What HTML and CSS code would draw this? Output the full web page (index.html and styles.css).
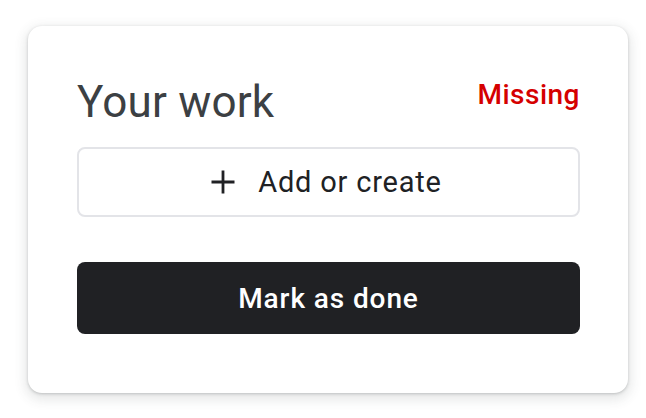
FILE: index.html
```html
<!DOCTYPE html>
<html>
<head>
<meta charset="utf-8">
<link rel="stylesheet" href="styles.css">
</head>
<body>
<div class="card">
  <div class="header">
    <h2 class="title">Your work</h2>
    <span class="status">Missing</span>
  </div>
  <button class="add-btn" type="button">
    <svg class="plus" width="24" height="24" viewBox="0 0 24 24" aria-hidden="true"><path d="M12 0.5v23M0.5 12h23" stroke="#202124" stroke-width="2.8" fill="none"/></svg>
    <span>Add or create</span>
  </button>
  <button class="done-btn" type="button">Mark as done</button>
</div>
</body>
</html>
```
FILE: styles.css
```css
html, body {
  margin: 0;
  padding: 0;
  background: #ffffff;
}
body {
  font-family: Roboto, "Noto Sans", Arial, sans-serif;
  padding: 26px 0 25px 28px;
}
.card {
  box-sizing: border-box;
  width: 600px;
  height: 367px;
  background: #fff;
  border-radius: 14px;
  box-shadow: 0 1px 3px rgba(60,64,67,0.25), 0 4px 12px 3px rgba(60,64,67,0.12);
  padding: 52px 48px 0 49px;
  display: flex;
  flex-direction: column;
}
.header {
  display: flex;
  justify-content: space-between;
  align-items: flex-start;
  height: 69px;
}
.title {
  margin: 0;
  font-size: 44px;
  font-weight: 400;
  line-height: 48px;
  color: #3c4043;
  letter-spacing: 0.2px;
}
.status {
  font-size: 28px;
  font-weight: 500;
  line-height: 32px;
  color: #d50000;
  margin-top: 1px;
  letter-spacing: 0.5px;
}
.add-btn {
  box-sizing: border-box;
  height: 70px;
  width: 100%;
  border: 2px solid #e3e4e8;
  border-radius: 8px;
  background: #fff;
  display: flex;
  align-items: center;
  justify-content: center;
  gap: 23px;
  font-family: inherit;
  font-size: 29px;
  letter-spacing: 0.8px;
  color: #202124;
  padding: 0 4px 0 0;
  margin-top: 0;
}
.plus { display: block; }
.done-btn {
  box-sizing: border-box;
  margin-top: 45px;
  height: 72px;
  width: 100%;
  border: none;
  border-radius: 8px;
  background: #202124;
  color: #fff;
  font-family: inherit;
  font-size: 28px;
  font-weight: 500;
  letter-spacing: 0.9px;
  padding: 0;
}
```
